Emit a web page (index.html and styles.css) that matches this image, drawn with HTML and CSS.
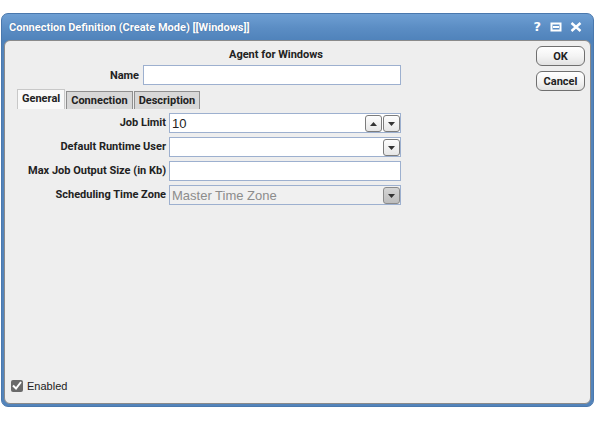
FILE: index.html
```html
<!DOCTYPE html>
<html>
<head>
<meta charset="utf-8">
<link rel="stylesheet" href="styles.css">
</head>
<body>
<div class="window">
  <div class="titlebar">
    <span class="title">Connection Definition (Create Mode) [[Windows]]</span>
    <div class="tools">
      <span class="tool help">?</span>
      <svg class="tool" width="12" height="10" viewBox="0 0 12 10"><rect x="1.5" y="1.5" width="9" height="7" fill="none" stroke="#fff" stroke-width="2"/><rect x="3" y="4" width="6" height="2" fill="#fff"/></svg>
      <svg class="tool" width="12" height="10" viewBox="0 0 12 10"><path d="M1.5 1 L10.5 9 M10.5 1 L1.5 9" stroke="#fff" stroke-width="2.4"/></svg>
    </div>
  </div>
  <div class="panel">
    <div class="body">
      <div class="main">
        <div class="heading">Agent for Windows</div>
        <div class="name-row">
          <label class="name-label">Name</label>
          <div class="input name-input"></div>
        </div>
        <div class="tabs">
          <div class="tab active">General</div>
          <div class="tab">Connection</div>
          <div class="tab">Description</div>
        </div>
        <div class="form">
          <label class="lbl">Job Limit</label>
          <div class="input field">
            <span class="val">10</span>
            <span class="btns">
              <span class="sbtn"><svg width="7" height="4" viewBox="0 0 7 4"><path d="M0 4 L3.5 0 L7 4 Z" fill="#333"/></svg></span>
              <span class="sbtn"><svg width="7" height="4" viewBox="0 0 7 4"><path d="M0 0 L7 0 L3.5 4 Z" fill="#333"/></svg></span>
            </span>
          </div>
          <label class="lbl">Default Runtime User</label>
          <div class="input field">
            <span class="val"></span>
            <span class="btns">
              <span class="sbtn"><svg width="7" height="4" viewBox="0 0 7 4"><path d="M0 0 L7 0 L3.5 4 Z" fill="#333"/></svg></span>
            </span>
          </div>
          <label class="lbl">Max Job Output Size (in Kb)</label>
          <div class="input field"><span class="val"></span></div>
          <label class="lbl">Scheduling Time Zone</label>
          <div class="input field disabled">
            <span class="val">Master Time Zone</span>
            <span class="btns">
              <span class="sbtn dis"><svg width="7" height="4" viewBox="0 0 7 4"><path d="M0 0 L7 0 L3.5 4 Z" fill="#333"/></svg></span>
            </span>
          </div>
        </div>
      </div>
      <div class="actions">
        <button class="btn">OK</button>
        <button class="btn">Cancel</button>
      </div>
    </div>
    <div class="footer">
      <span class="check"><svg width="10" height="9" viewBox="0 0 10 9"><path d="M1 4.5 L4 7.5 L9 1" fill="none" stroke="#fff" stroke-width="2"/></svg></span>
      <span class="check-label">Enabled</span>
    </div>
  </div>
</div>
</body>
</html>
```

FILE: styles.css
```css
* { box-sizing: border-box; }
body {
  margin: 0;
  background: #fff;
  font-family: Roboto, "Liberation Sans", Arial, sans-serif;
}
.window {
  margin: 13px 0 0 1px;
  width: 593px;
  height: 394px;
  border-radius: 7px 7px 7px 7px;
  background: linear-gradient(#6e9fd3 0px, #5b8dc4 14px, #4f82ba 27px, #5384bb 40px, #5384bb 100%);
  border: 1px solid #4a78ad;
  padding: 0 2px 2px 2px;
  display: flex;
  flex-direction: column;
}
.titlebar {
  height: 26px;
  display: flex;
  align-items: center;
  padding: 0 0 0 5px;
  color: #fff;
  flex: none;
}
.title {
  font-weight: bold;
  font-size: 11px;
  text-shadow: 0 0 1px rgba(30,60,110,0.6);
  flex: 1;
}
.tools {
  display: flex;
  align-items: center;
  gap: 8px;
  margin-right: 9px;
}
.help {
  font-weight: bold;
  font-size: 13px;
  font-family: "DejaVu Sans", sans-serif;
  line-height: 12px;
  margin-right: 1px;
}
.tool { display: block; }
.panel {
  flex: 1;
  background: #eeeeee;
  border: 1px solid #8a8a8a;
  border-radius: 6px;
  display: flex;
  flex-direction: column;
  font-size: 11px;
  color: #222;
}
.body {
  flex: 1;
  display: flex;
}
.main {
  flex: none;
  width: 531px;
  padding-top: 8px;
}
.heading {
  width: 542px;
  text-align: center;
  font-weight: bold;
  height: 12px;
  line-height: 12px;
}
.name-row {
  display: flex;
  align-items: center;
  margin-top: 4px;
  height: 20px;
}
.name-label {
  width: 134px;
  text-align: right;
  font-weight: bold;
  margin-right: 4px;
}
.input {
  background: #fff;
  border: 1px solid #9db0cf;
  height: 20px;
}
.name-input { width: 258px; }
.tabs {
  display: flex;
  align-items: flex-end;
  margin: 4px 0 0 12px;
  height: 20px;
}
.tab {
  height: 18px;
  border: 1px solid #8f8f8f;
  border-bottom: none;
  background: #d8d8d8;
  font-weight: bold;
  padding: 0 4px;
  line-height: 17px;
  margin-right: 1px;
}
.tab.active {
  height: 20px;
  background: #f9f9f9;
  border-color: #c8c8c8;
  line-height: 18px;
  padding: 0 4px 0 4px;
  margin-right: 1px;
}
.form {
  display: grid;
  grid-template-columns: 161px 232px;
  column-gap: 3px;
  row-gap: 4px;
  margin-top: 4px;
}
.lbl {
  text-align: right;
  font-weight: bold;
  line-height: 20px;
  height: 20px;
}
.field {
  display: flex;
  align-items: center;
  font-family: "Liberation Sans", Arial, sans-serif;
  font-size: 13px;
  padding-left: 2px;
}
.field .val { flex: 1; color: #222; }
.field.disabled { background: #f0f0f0; }
.field.disabled .val { color: #8c8c8c; }
.btns {
  display: flex;
  gap: 1px;
}
.sbtn {
  width: 17px;
  height: 17px;
  border: 1px solid #7c7c7c;
  border-radius: 3px;
  background: linear-gradient(#fdfdfd, #e6e6e6);
  display: flex;
  align-items: center;
  justify-content: center;
  padding-top: 2px;
}
.sbtn.dis {
  background: linear-gradient(#d4d4d4, #bdbdbd);
  border-color: #8a8a8a;
}
.actions {
  display: flex;
  flex-direction: column;
  gap: 5px;
  padding-top: 5px;
}
.btn {
  width: 49px;
  height: 20px;
  border: 1px solid #6f6f6f;
  border-radius: 6px;
  background: linear-gradient(#ffffff, #f4f4f4 50%, #e2e2e2);
  font-family: Roboto, "Liberation Sans", Arial, sans-serif;
  font-weight: bold;
  font-size: 11px;
  color: #222;
  padding: 0;
}
.footer {
  display: flex;
  align-items: center;
  padding: 0 0 9px 6px;
  height: 26px;
}
.check {
  width: 12px;
  height: 12px;
  background: #6a6a6a;
  border-radius: 2px;
  display: flex;
  align-items: center;
  justify-content: center;
  margin-right: 4px;
}
.check-label {
  font-family: "Liberation Sans", Arial, sans-serif;
  font-size: 11px;
  color: #222;
}
```
